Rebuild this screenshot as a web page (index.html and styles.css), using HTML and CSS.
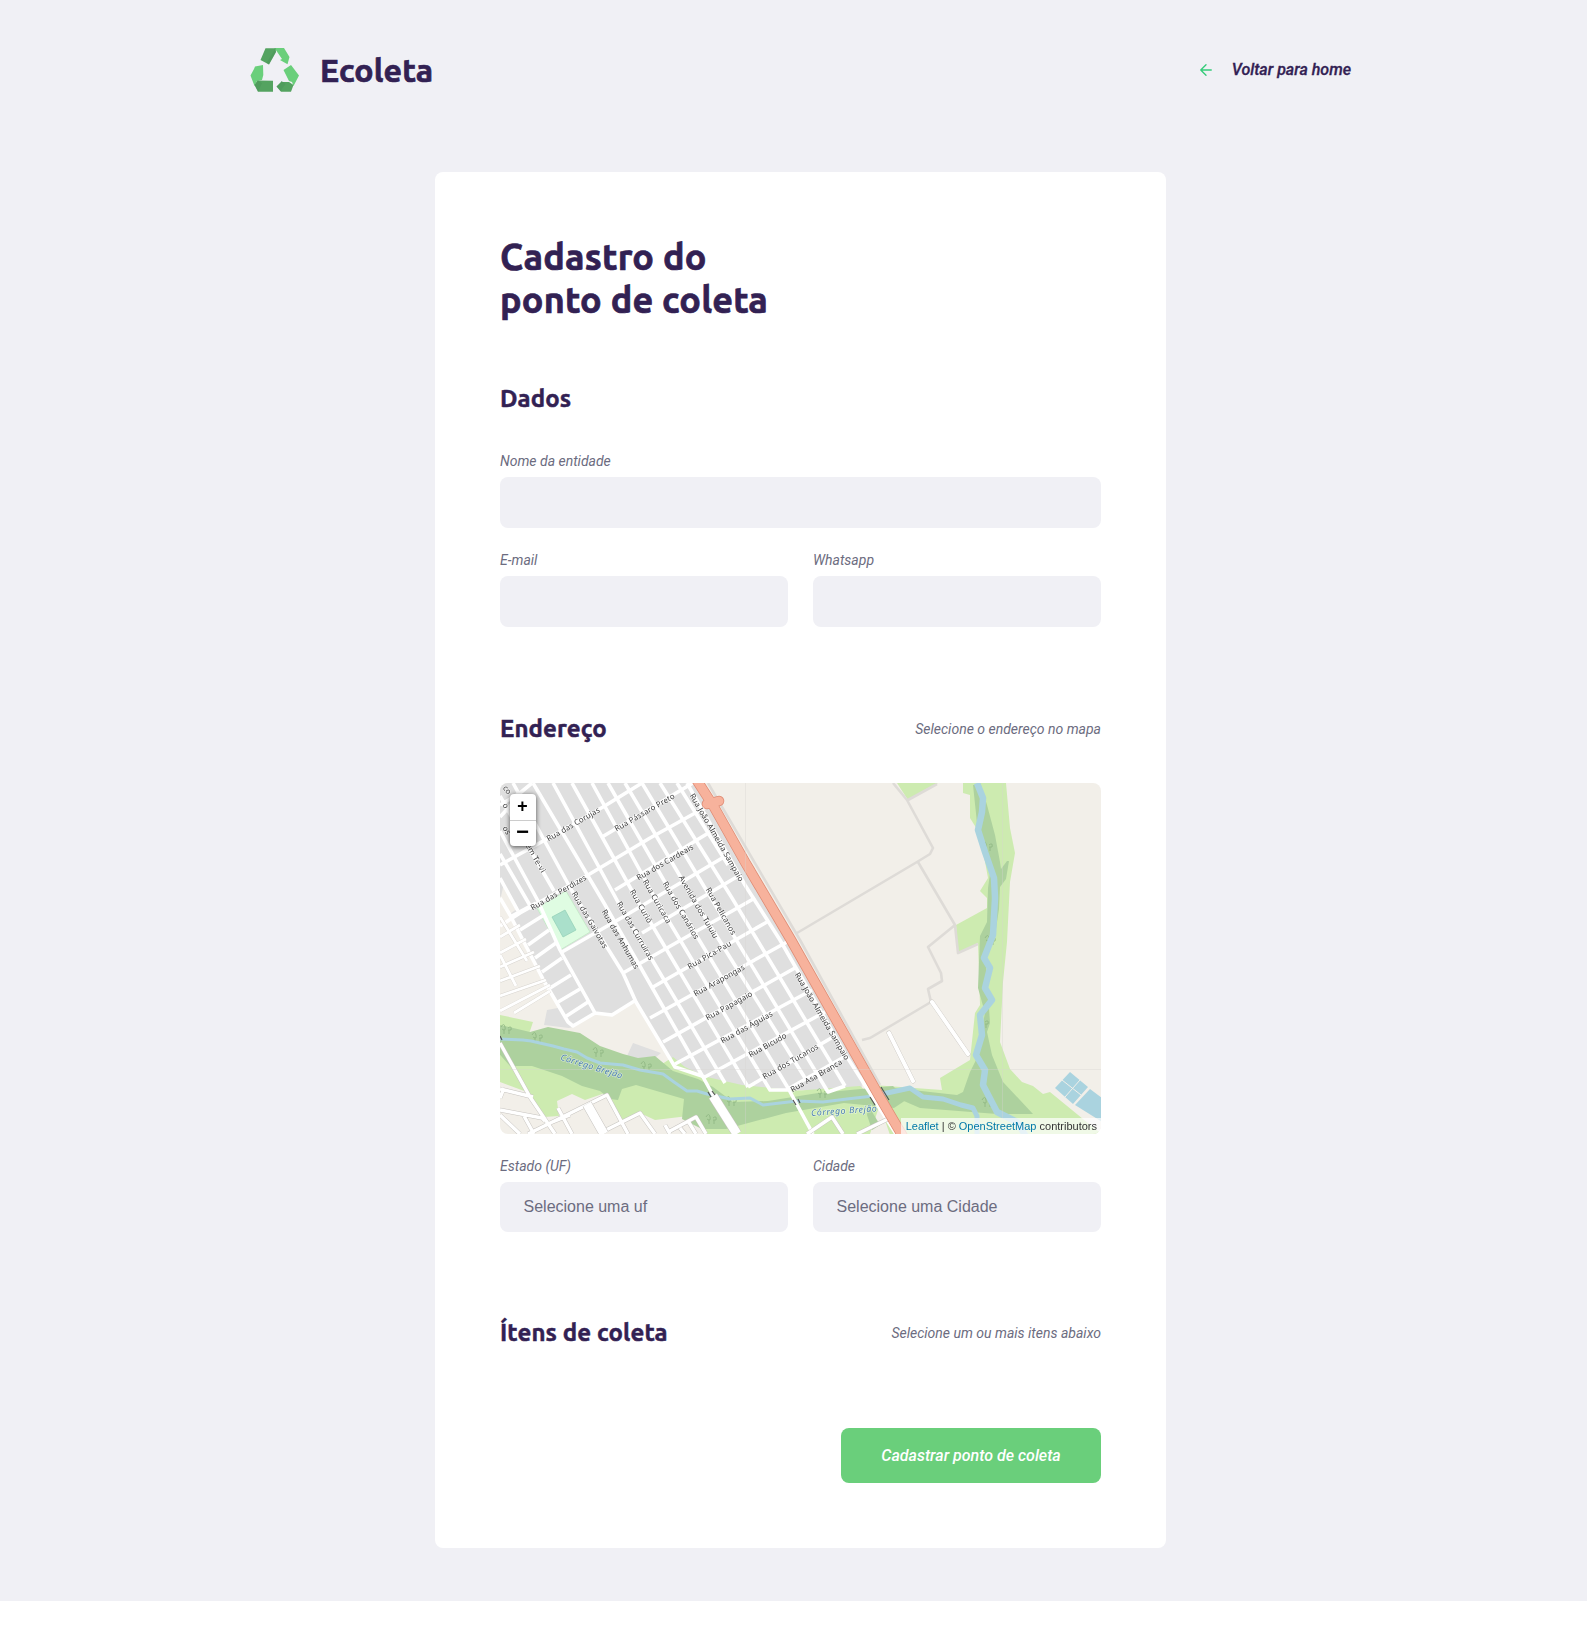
FILE: index.html
```html
<!DOCTYPE html>
<html lang="pt-BR">
<head>
<meta charset="utf-8">
<title>Ecoleta</title>
<link rel="stylesheet" href="styles.css">
</head>
<body>
<div class="page">
  <header class="header">
    <div class="brand">
      <svg class="logo" viewBox="0 0 49 44" width="49" height="44">
        <path fill="#6acf7b" d="M24 0h10l5.500 9-2 7.200L30 12l2-1L25.500 1.500zM5 18.500l8-1.500.3 10-1.300 5-5 1-2.500 5L.5 27.500 4 21zM33.500 22l7.500-5L49 27.500 43.500 38l-1.500-4-3-1z"/>
        <path fill="#54a360" d="M15.500.2H25.500L26 4 19 16.500 10.500 12zM7.500 32.500l15.500.2v11H8L4.500 37zM26.500 38.500L32 33v1h7l4.500 3L41 43.700H31z"/>
        <path fill="#489057" d="M25.500.2L26 4 19 16.500l-2.500-1.400zM8 32.500l-3.500 4.500L8 43.700l4-8.500zM32 33l-5.500 5.500 4 4.500 5-7z" opacity=".4"/>
      </svg>
      <span class="brand-name">Ecoleta</span>
    </div>
    <a class="back">
      <svg viewBox="0 0 24 24" width="18" height="18" fill="none" stroke="#34cb79" stroke-width="1.800" stroke-linecap="round" stroke-linejoin="round"><path d="M19 12H5M12 19l-7-7 7-7"/></svg>
      <span>Voltar para home</span>
    </a>
  </header>

  <form class="card">
    <h1>Cadastro do<br>ponto de coleta</h1>

    <section class="group">
      <div class="legend"><h2>Dados</h2></div>
      <div class="field"><label>Nome da entidade</label><input type="text"></div>
      <div class="row">
        <div class="field"><label>E-mail</label><input type="text"></div>
        <div class="field"><label>Whatsapp</label><input type="text"></div>
      </div>
    </section>

    <section class="group">
      <div class="legend"><h2>Endereço</h2><span>Selecione o endereço no mapa</span></div>
      <div class="map">
        <svg viewBox="0 0 601 351" width="601" height="351">
          <rect width="601" height="351" fill="#f2efe9"/>
          <!-- residential land -->
          <g fill="#dfdfdf">
            <path d="M0 0H196L292 157 360 276 362 305 330 309 303 307 262 308 230 303 205 294 175 284 136 219 112 232 95 230 73 243 66 237 44 198 10 132 0 113z"/>
            <path d="M47 227l16-3 10 20-4 1-25-3zM133 260l28 10-10 8-24-5z"/>
          </g>
          <path d="M0 113L10 132 44 198 0 225zM4 100l14 25-8 6-10-13z" fill="#f2efe9"/>
          <!-- grass and woods -->
          <g fill="#cdebb0">
            <path d="M0 232l33 7-4 12 60 10 70 22 14-9 12 10 22 10 35 8 60 6 10 4v54H205V331l-50 6-15-7-18 7-17-27-20 7-13-6-15 7 2 15-15 1-17-25L0 299z"/>
            <path d="M397 0h41l-30 17zM463 0h43l4 45 5 25-5 29-3 60-4 40-3 60 10 27 12 13 11 4 10 8 7-2 33 27 20 16H390L373 302l69 5-2-12 30-18 5-47 5-8-2-62-20 10-2-28 31-17v-10l-7-7 8-13-8-44-10-16V12l-7-2z"/>
            <path d="M280 309l80-6 20 18-10 30h-75z"/>
          </g>
          <g fill="#add19e">
            <path d="M0 242l30 7 18-5 32 6 20 13 23 8 15 4 17-2 18 15 25 8 15 8 20 15 35-1 50-8 75-7 13 14-12 8-50-5-58 10-60 16h-24l-20-10 2-20-48-14-14 4-4 11-8-1-10-8-18-5-20-10-30-10-22 0-15-17-13 1-10 7z"/>
            <path d="M473 2h8l6 20 8 30 5 27 1 7 6-8h2l-3 18-6 8-1 22-4 26-10 18 3 40 2 30-3 9 5 23 11 27 30 32H497L420 325l-30-13-3-8 43 5 27 3 6-3 7-20 7-14 4-25 4-20-7-25 2-52 7-14 1-34 3-22-14-43z"/>
            <path d="M368 322l12 20-8 5-5-15z"/>
          </g>
          <g fill="none" stroke="#8db581" stroke-width="1" opacity=".8">
            <path id="t" d="M32 252q3-5 4 0t-3 2M35 254v5M39 253q4-3 3 2l-3 0M40 255v4"/>
            <use href="#t" x="61" y="15"/><use href="#t" x="109" y="29"/><use href="#t" x="194" y="64"/><use href="#t" x="174" y="82"/><use href="#t" x="285" y="56"/><use href="#t" x="450" y="-191"/><use href="#t" x="453" y="-97"/><use href="#t" x="446" y="-14"/><use href="#t" x="450" y="65"/><use href="#t" x="-31" y="-8"/>
          </g>
          <!-- water -->
          <g fill="none" stroke="#aad3df" stroke-linejoin="round">
            <path stroke-width="3" d="M0 256l23 1 8 1 22 5 11 3 13 3 10 6 13 5 23 2 17 5 23 4 11 8 13 9 10 0 10 3 23 5 20-1 13 7 34-4 26 1 24-3 26-3"/>
            <path stroke-width="5" d="M373 313l14-3 23-5 13 9 20 2 18 6 12 3 4 8v18"/>
            <path stroke-width="6.500" d="M477 0l6 15-1 14-4 18 7 22 9 26 1 20-2 37-9 23 6 10-5 20 7 12-12 15 2 20-6 20 9 15-2 15 14 27 20 10 10 16"/>
          </g>
          <path fill="#aad3df" d="M570 289l18 15-15 17-18-16zM590 306l12 9v24l-27-17z"/>
          <path fill="none" stroke="#f2efe9" d="M562 297l19 15M580 297l-15 17"/>
          <!-- park -->
          <path fill="#dffce2" stroke="#bde8c0" stroke-width=".7" d="M37 125l29-17 24 41-30 18z"/>
          <path fill="#aae0cb" stroke="#8fcfb5" stroke-width=".7" d="M52 134l13-7 11 20-13 7z"/>
          <!-- tracks -->
          <g fill="none" stroke="#dedbd7" stroke-width="2.600" stroke-linejoin="round">
            <path d="M393 0l14 17 26 48-3 6-13 8-120 71M437 1l-29 16M418 79l37 63-27 22 13 26 1 8-14 8 3 13-61 36-8 2M455 142l3 28 20-9M208 0L300 157l80 145"/>
          </g>
          <path d="M389 250l24 48M432 219l36 52" fill="none" stroke="#c9c6c1" stroke-width="4.800" stroke-linecap="round"/>
          <path d="M389 250l24 48M432 219l36 52" fill="none" stroke="#fff" stroke-width="4" stroke-linecap="round"/>
          <!-- streets -->
          <g fill="none" stroke-linejoin="round">
            <g stroke="#fff" stroke-width="3.600">
              <path d="M0 82L45 57 103 24 142 0M102 54L193 0M0 143L20 130 88 92 150 55 206 24M115 107L210 49M62 169L123 134 229 71M142 150L240 92M123 190L255 115M153 204L267 139M150 235L287 159M163 259L295 185M175 281L312 207M203 295L325 229M248 304L333 254M288 306L344 274"/>
              <path d="M13 0L72 108 123 190 136 219 175 284 205 294M33 0L104 120 203 294M53 0L118 119 225 300M72 0L136 115 248 304M92 0L155 115 270 307H288M108 0L174 115 288 305 313 351M125 0L193 115 305 295M142 0L211 115 328 309 345 303M160 0L232 115 345 303M177 0L228 82M187 0L245 102 280 157 347 274 396 351"/>
              <path d="M0 13L32 70 54 108M0 48L38 118 60 167 95 230M0 71L32 126M0 22L20 10 32 0M0 34L12 21M0 95L18 128M0 115L10 132 44 198 68 239 73 243 95 230 112 232 136 217"/>
              <path d="M10 134L36 120M20 147L44 132M28 162L49 147M35 175L56 160M42 189L62 175M50 205L71 192M58 219L80 206M65 234L88 219"/>
            </g>
            <path stroke="#d6d3ce" stroke-width="3.600" d="M0 154L20 142M0 170L26 156M0 184L34 169M0 198L40 183M0 213L46 197M0 228L50 202M14 230L50 208M0 172L16 203M0 134L27 178"/>
            <path stroke="#fff" stroke-width="2.900" d="M0 154L20 142M0 170L26 156M0 184L34 169M0 198L40 183M0 213L46 197M0 228L50 202M14 230L50 208M0 172L16 203M0 134L27 178"/>
            <path stroke="#c6c3bf" stroke-width="4.400" d="M0 260L30 314 55 351M0 306L33 314M0 327L42 335 45 338M0 332L20 351M0 315L4 305M58 325L72 351M28 351L107 312 128 351M45 342L70 332M104 348L140 330 155 351M165 342L170 351M170 348L196 334 206 351M180 345l5 6M188 338l8 13M307 351L332 334 343 351M357 351L388 336M24 333L34 351"/>
            <path stroke="#fff" stroke-width="3.500" d="M0 260L30 314 55 351M0 306L33 314M0 327L42 335 45 338M0 332L20 351M0 315L4 305M58 325L72 351M28 351L107 312 128 351M45 342L70 332M104 348L140 330 155 351M165 342L170 351M170 348L196 334 206 351M180 345l5 6M188 338l8 13M307 351L332 334 343 351M357 351L388 336M24 333L34 351M203 294L214 314"/>
            <path stroke="#c6c3bf" stroke-width="10" d="M213 313L237 351M87 321L104 351"/>
            <path stroke="#fff" stroke-width="9" d="M213 313L237 351M87 321L104 351"/>
            <path stroke="#555" stroke-width="1.200" d="M208 309l3 5M212 308l3 4M293 317l3 5M298 316l2 4M370 314l5 8M381 304l8 13M0 253l2 4"/>
            <path stroke="#df8a72" stroke-width="10.500" d="M196-4L214 24 245 79 291 157 378 311 405 357M207 21L219 18" stroke-linecap="round"/>
            <path stroke="#f7b29c" stroke-width="9" d="M196-4L214 24 245 79 291 157 378 311 405 357M207 21L219 18" stroke-linecap="round"/>
          </g>
          <path d="M245.500 0v351M502.500 0v351M0 286.500h601" stroke="#d8d5d2" stroke-width="1" opacity=".35"/>
          <!-- street names -->
          <g class="names">
            <text transform="translate(47 56)rotate(-30)" dy="3" textLength="60">Rua das Corujas</text>
            <text transform="translate(115 46)rotate(-30)" dy="3" textLength="68">Rua Pássaro Preto</text>
            <text transform="translate(31 125)rotate(-30)" dy="3" textLength="63">Rua das Perdizes</text>
            <text transform="translate(137 95)rotate(-30)" dy="3" textLength="64">Rua dos Cardeais</text>
            <text transform="translate(188 184)rotate(-30)" dy="3" textLength="49">Rua Pica-Pau</text>
            <text transform="translate(194 211)rotate(-29)" dy="3" textLength="57">Rua Arapongas</text>
            <text transform="translate(206 235)rotate(-29)" dy="3" textLength="52">Rua Papagaio</text>
            <text transform="translate(221 258)rotate(-29)" dy="3" textLength="58">Rua das Águias</text>
            <text transform="translate(249 272)rotate(-29)" dy="3" textLength="42">Rua Bicudo</text>
            <text transform="translate(263 294)rotate(-30)" dy="3" textLength="63">Rua dos Tucanos</text>
            <text transform="translate(291 307)rotate(-30)" dy="3" textLength="58">Rua Asa Branca</text>
            <text transform="translate(192 11)rotate(60)" dy="3" textLength="100">Rua João Almeida Sampaio</text>
            <text transform="translate(297 190)rotate(59.500)" dy="3" textLength="100">Rua João Almeida Sampaio</text>
            <text transform="translate(74 109)rotate(60)" dy="3" textLength="64">Rua das Gaivotas</text>
            <text transform="translate(104 127)rotate(60)" dy="3" textLength="67">Rua das Anhumas</text>
            <text transform="translate(119 119)rotate(60)" dy="3" textLength="66">Rua das Curruiras</text>
            <text transform="translate(132 107)rotate(60)" dy="3" textLength="37">Rua Curió</text>
            <text transform="translate(145 97)rotate(60)" dy="3" textLength="49">Rua Curicaca</text>
            <text transform="translate(165 99)rotate(60)" dy="3" textLength="65">Rua dos Canários</text>
            <text transform="translate(181 93)rotate(60)" dy="3" textLength="71">Avenida dos Tuiuiu</text>
            <text transform="translate(208 105)rotate(60)" dy="3" textLength="53">Rua Pelicanos</text>
            <text transform="translate(28 61)rotate(60)" dy="3" textLength="32">em Te-vi</text>
            <text transform="translate(4 4)rotate(50)" dy="2">co</text>
            <text transform="translate(4 21)rotate(60)" dy="2">o</text>
            <text transform="translate(4 44)rotate(60)" dy="2">os</text>
            <text class="water" transform="translate(61 274)rotate(17)" dy="3" textLength="64">Córrego Brejão</text>
            <text class="water" transform="translate(311 330)rotate(-4)" dy="3" textLength="66">Córrego Brejão</text>
          </g>
        </svg>
        <div class="zoom"><span>+</span><span class="minus">−</span></div>
        <div class="attribution"><a>Leaflet</a> | © <a>OpenStreetMap</a> contributors</div>
      </div>
      <div class="row">
        <div class="field"><label>Estado (UF)</label><select><option>Selecione uma uf</option></select></div>
        <div class="field"><label>Cidade</label><select><option>Selecione uma Cidade</option></select></div>
      </div>
    </section>

    <section class="group">
      <div class="legend"><h2>Ítens de coleta</h2><span>Selecione um ou mais itens abaixo</span></div>
    </section>

    <button type="button">Cadastrar ponto de coleta</button>
  </form>
</div>
</body>
</html>
```
FILE: styles.css
```css
* { box-sizing: border-box; margin: 0; padding: 0; }

body {
  background: #fff;
  color: #6c6c80;
  font-family: Roboto, sans-serif;
  -webkit-font-smoothing: antialiased;
}

.page {
  height: 1601px;
  padding-left: 14px;
  background: #f0f0f5;
}

.header {
  display: flex;
  align-items: center;
  justify-content: space-between;
  width: 1101px;
  height: 92px;
  margin: 0 auto;
  padding-top: 48px;
}

.brand { display: flex; align-items: center; gap: 21px; }
.logo { display: block; }

.brand-name, h1, h2 {
  font-family: Ubuntu, "Noto Sans", sans-serif;
  font-weight: 700;
  color: #322153;
  -webkit-text-stroke: .7px #322153;
  letter-spacing: .2px;
}

.brand-name { font-size: 32px; line-height: 44px; }

.back {
  display: flex;
  align-items: center;
  gap: 17px;
  color: #322153;
  font-size: 16px;
  font-style: italic;
  font-weight: 500;
  line-height: 18px;
  -webkit-text-stroke: .3px #322153;
}
.back span { padding-bottom: 1px; }
.back svg { -webkit-text-stroke: 0; }

.card {
  display: flex;
  flex-direction: column;
  width: 731px;
  height: 1376px;
  margin: 80px auto 0;
  padding: 64px 65px 65px;
  background: #fff;
  border-radius: 8px;
}

h1 { font-size: 36px; line-height: 42.500px; }
h2 { font-size: 24px; line-height: 28px; -webkit-text-stroke-width: .5px; letter-spacing: .12px; }

.legend {
  display: flex;
  align-items: center;
  justify-content: space-between;
  height: 28px;
  margin-bottom: 40px;
}

.group:nth-of-type(1) { margin-top: 64px; }
.group:nth-of-type(2) { margin-top: 88px; }
.group:nth-of-type(3) { margin-top: 87px; }

.legend span, label {
  font-size: 14px;
  font-style: italic;
  line-height: 16px;
}

.field { display: flex; flex-direction: column; flex: 1; }
.field label { margin-bottom: 8px; }
.row { display: flex; gap: 25px; margin-top: 24px; }
.row label { position: relative; top: -.500px; }

input, select {
  width: 100%;
  height: 51px;
  padding: 0 24px;
  border: 0;
  border-radius: 8px;
  background: #f0f0f5;
  color: #6c6c80;
  font: 16px "Liberation Sans", sans-serif;
  appearance: none;
}
select { height: 50px; padding: 0 23.500px 1px; }

.map {
  position: relative;
  height: 351px;
  border-radius: 8px;
  overflow: hidden;
}
.map svg { display: block; }

.names text { font: 7.800px "Noto Sans", sans-serif; fill: #3c3c3c; stroke: #fff; stroke-opacity: .5; stroke-width: 1.300px; paint-order: stroke; }
.names .water { font-style: italic; font-size: 8.800px; fill: #4d80b3; }

.zoom {
  position: absolute;
  left: 9.500px;
  top: 11px;
  width: 26px;
  border-radius: 4px;
  background: #fff;
  box-shadow: 0 1px 5px rgba(0, 0, 0, .65);
}
.zoom span {
  display: block;
  height: 26px;
  color: #000;
  font: bold 18px/26px "Liberation Mono", monospace;
  text-align: center;
}
.zoom .minus { border-top: 1px solid #ccc; font-size: 22px; }

.attribution {
  position: absolute;
  right: 0;
  bottom: 0;
  height: 16px;
  padding: 0 4px 0 5px;
  background: rgba(255, 255, 255, .7);
  color: #333;
  font: 11px/16px "Liberation Sans", sans-serif;
}
.attribution a { color: #0078a8; }

button {
  align-self: flex-end;
  width: 260px;
  height: 55px;
  margin-top: auto;
  border: 0;
  border-radius: 8px;
  background: #6acf7b;
  color: #fff;
  font: italic 500 16px Roboto, sans-serif;
}
```
